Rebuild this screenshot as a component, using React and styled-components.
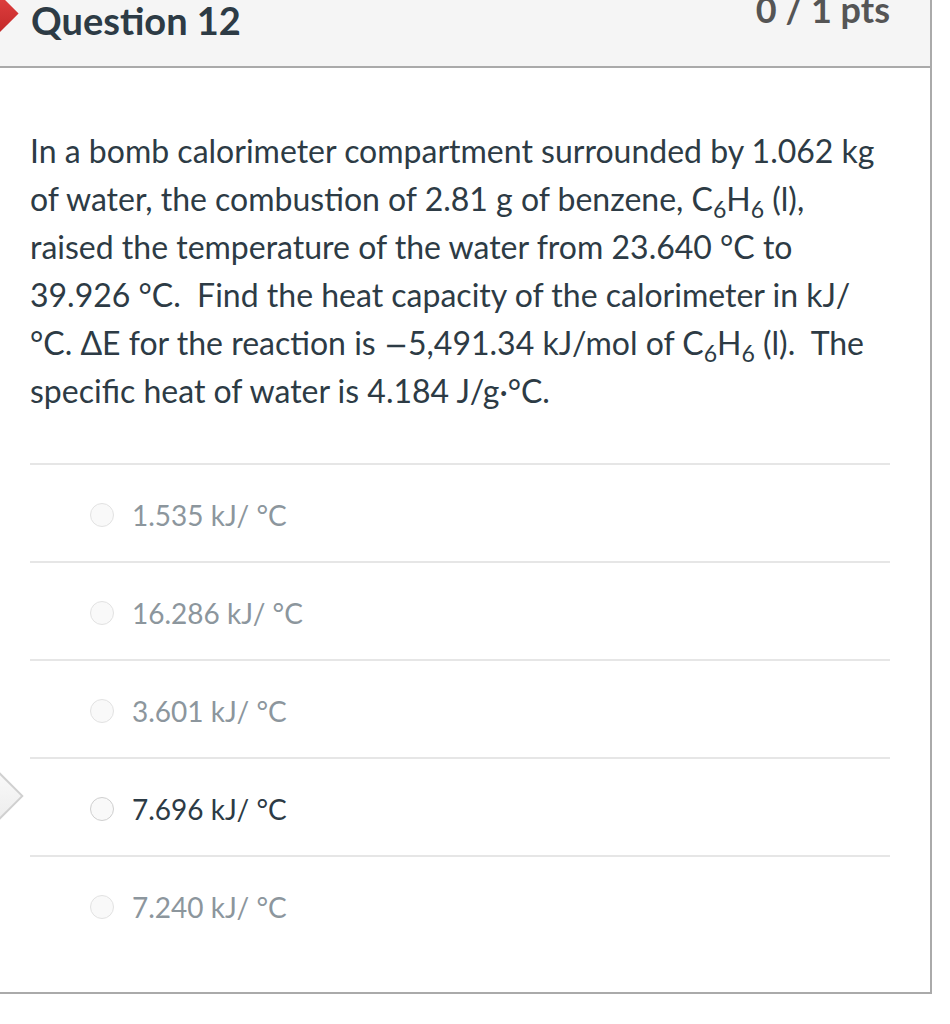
import styled, { createGlobalStyle } from "styled-components";

const GlobalStyle = createGlobalStyle`
  body {
    margin: 0;
    background: #fff;
    font-family: Lato, "Noto Sans", sans-serif;
    color: #2d3b45;
  }
`;

const Panel = styled.div`
  width: 930px;
  border-right: 2px solid #aaa;
  border-bottom: 2px solid #aaa;
  padding-bottom: 39px;
  background: #fff;
`;

const Header = styled.div`
  position: relative;
  height: 66px;
  background: #f5f5f5;
  border-bottom: 2px solid #aaa;
  display: flex;
  justify-content: space-between;
  align-items: flex-start;
  padding: 0 40px 0 31px;
  overflow: hidden;
`;

const Marker = styled.div`
  position: absolute;
  left: -14px;
  top: 0px;
  width: 27px;
  height: 27px;
  background: linear-gradient(135deg, #e04040, #c42a2a);
  transform: rotate(45deg);
`;

const Title = styled.h2`
  margin: 0;
  font-size: 38px;
  line-height: 40px;
  font-weight: 700;
  color: #2d3b45;
`;

const Points = styled.div`
  margin-top: -9px;
  font-size: 36px;
  line-height: 1;
  font-weight: 700;
  color: #555;
`;

const Text = styled.div`
  padding: 59px 40px 0 30px;
  font-size: 32px;
  line-height: 48px;
`;

const Line = styled.div`
  white-space: nowrap;
`;

const Sub = styled.span`
  font-size: 0.72em;
  position: relative;
  top: 0.3em;
  line-height: 0;
`;

const Minus = styled.span`
  font-family: "DejaVu Sans", sans-serif;
  font-size: 0.9em;
  line-height: 0;
`;

const Answers = styled.div`
  margin: 48px 40px 0 30px;
`;

const Answer = styled.div`
  position: relative;
  box-sizing: border-box;
  height: 98px;
  border-top: 2px solid #e6e6e6;
  display: flex;
  align-items: center;
  padding: 4px 0 0 60px;
`;

const Arrow = styled.div`
  position: absolute;
  left: -57px;
  top: 16px;
  width: 38px;
  height: 38px;
  background: linear-gradient(135deg, #fafafa, #ececec);
  border: 2px solid #d0d0d0;
  transform: rotate(45deg);
`;

const Radio = styled.span`
  width: 22px;
  height: 22px;
  border-radius: 50%;
  border: 1.5px solid ${(p) => (p.$selected ? "#cfcfcf" : "#e2e2e2")};
  background: #f9f9f9;
  margin-right: 18px;
  flex-shrink: 0;
`;

const Label = styled.span`
  font-size: 28px;
  color: ${(p) => (p.$selected ? "#2d3b45" : "#8c969d")};
`;

const answers = [
  { text: "1.535 kJ/ °C" },
  { text: "16.286 kJ/ °C" },
  { text: "3.601 kJ/ °C" },
  { text: "7.696 kJ/ °C", selected: true },
  { text: "7.240 kJ/ °C" },
];

const C6H6 = () => (
  <>
    C<Sub>6</Sub>H<Sub>6</Sub>
  </>
);

export default function App() {
  return (
    <>
      <GlobalStyle />
      <Panel>
        <Header>
          <Marker />
          <Title>Question 12</Title>
          <Points>0 / 1 pts</Points>
        </Header>
        <Text>
          <Line>In a bomb calorimeter compartment surrounded by 1.062 kg</Line>
          <Line>
            of water, the combustion of 2.81 g of benzene, <C6H6 /> (l),
          </Line>
          <Line>raised the temperature of the water from 23.640 °C to</Line>
          <Line>39.926 °C.&nbsp; Find the heat capacity of the calorimeter in kJ/</Line>
          <Line>
            °C. ΔE for the reaction is <Minus>−</Minus>5,491.34 kJ/mol of <C6H6 /> (l).&nbsp; The
          </Line>
          <Line>specific heat of water is 4.184 J/g·°C.</Line>
        </Text>
        <Answers>
          {answers.map((a) => (
            <Answer key={a.text}>
              {a.selected && <Arrow />}
              <Radio $selected={a.selected} />
              <Label $selected={a.selected}>{a.text}</Label>
            </Answer>
          ))}
        </Answers>
      </Panel>
    </>
  );
}
